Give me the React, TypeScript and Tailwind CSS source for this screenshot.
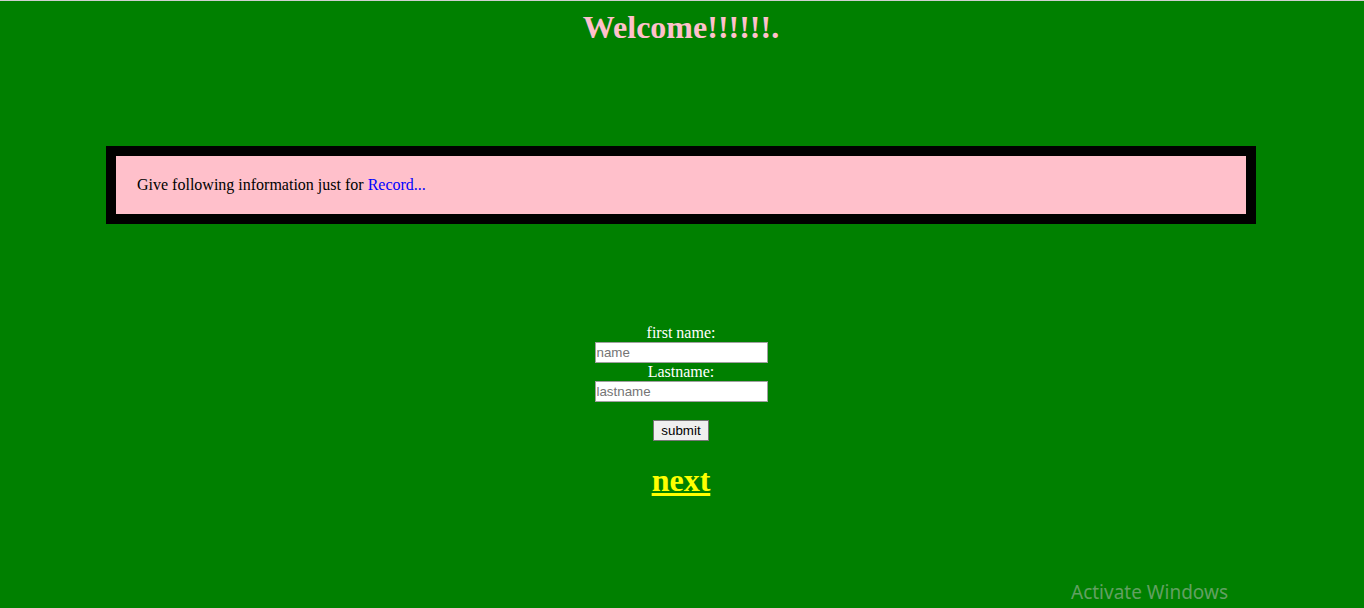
export default function App() {
  const serif = { fontFamily: '"Liberation Serif", "Times New Roman", serif' };
  return (
    <div className="relative w-[1364px] h-[608px] overflow-hidden bg-[#008000]" style={serif}>
      <div className="h-px bg-[#cfcfcf]" />
      <h1 className="mt-[8px] pr-[2px] text-center text-[32px] leading-[37px] font-bold text-[#ffc0cb]">Welcome!!!!!!.</h1>
      <div className="mt-[100px] ml-[106px] w-[1150px] border-[10px] border-black bg-[#ffc0cb] px-[21px] py-[20px] text-[16px] leading-[18px] text-black">
        Give following information just for <span className="text-[#0000ff]">Record...</span>
      </div>
      <form className="mt-[100px] pr-[2px] flex flex-col items-center text-white text-[16px] leading-[18px]">
        <label>first name:</label>
        <input
          placeholder="name"
          className="w-[173px] h-[21px] bg-white border border-[#a0a0a0] px-[1px] text-[13.33px] text-black placeholder:text-[#757575] outline-none"
          style={{ fontFamily: '"Liberation Sans", Arial, sans-serif' }}
        />
        <label>Lastname:</label>
        <input
          placeholder="lastname"
          className="w-[173px] h-[21px] bg-white border border-[#a0a0a0] px-[1px] text-[13.33px] text-black placeholder:text-[#757575] outline-none"
          style={{ fontFamily: '"Liberation Sans", Arial, sans-serif' }}
        />
        <div className="h-[18px]" />
        <button
          type="button"
          className="w-[56px] h-[21px] bg-[#efefef] border border-[#767676] text-[13.33px] leading-[17px] text-black"
          style={{ fontFamily: '"Liberation Sans", Arial, sans-serif' }}
        >
          submit
        </button>
        <a href="#" className="mt-[21px] text-[32px] leading-[37px] font-bold text-[#ffff00] underline">next</a>
      </form>
      <div
        className="absolute left-[1071px] top-[579px] text-[19px] leading-[26px] text-[#62a062]"
        style={{ fontFamily: '"Noto Sans", "Open Sans", sans-serif' }}
      >
        Activate Windows
      </div>
    </div>
  );
}
